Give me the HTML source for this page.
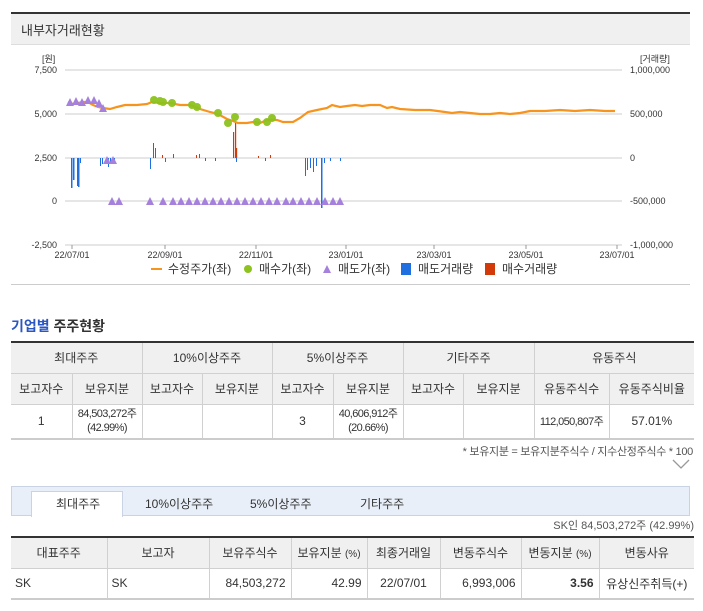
<!DOCTYPE html>
<html><head><meta charset="utf-8"><style>
*{margin:0;padding:0;box-sizing:border-box}
body{width:703px;height:611px;background:#fff;font-family:"Liberation Sans","Noto Sans CJK KR",sans-serif;color:#333;position:relative;overflow:hidden}
.abs{position:absolute}
table{border-collapse:collapse;position:absolute;font-size:12px;table-layout:fixed}
td{border:1px solid #d0d0d0;text-align:center;color:#333;white-space:nowrap;overflow:hidden}
.n{font-size:11px;letter-spacing:-0.6px}
</style></head><body>
<div class="abs" style="left:11px;top:12px;width:679px;height:33px;background:#f0f0f0;border-top:2px solid #333;border-bottom:1px solid #ddd"></div>
<div class="abs" style="left:21px;top:20px;font-size:13px;color:#333">내부자거래현황</div>
<div class="abs" style="left:11px;top:284px;width:679px;height:1px;background:#ccc"></div>
<svg class="abs" style="left:0;top:45px" width="703" height="240" viewBox="0 45 703 240">
<g stroke="#ddd" stroke-width="1.5">
<line x1="65" y1="70" x2="622" y2="70"/><line x1="65" y1="114" x2="622" y2="114"/><line x1="65" y1="158" x2="622" y2="158"/><line x1="65" y1="201" x2="622" y2="201"/><line x1="65" y1="245" x2="622" y2="245"/>
</g>
<g font-size="9" fill="#333" font-family="Liberation Sans,Noto Sans CJK KR,sans-serif">
<text x="42" y="62">[원]</text>
<text x="57" y="73" text-anchor="end">7,500</text><text x="57" y="117" text-anchor="end">5,000</text><text x="57" y="161" text-anchor="end">2,500</text><text x="57" y="204" text-anchor="end">0</text><text x="57" y="248" text-anchor="end">-2,500</text>
<text x="640" y="62">[거래량]</text>
<text x="630" y="73">1,000,000</text><text x="630" y="117">500,000</text><text x="630" y="161">0</text><text x="630" y="204">-500,000</text><text x="630" y="248">-1,000,000</text>
<text x="72" y="258" text-anchor="middle">22/07/01</text><text x="165" y="258" text-anchor="middle">22/09/01</text><text x="256" y="258" text-anchor="middle">22/11/01</text><text x="346" y="258" text-anchor="middle">23/01/01</text><text x="434" y="258" text-anchor="middle">23/03/01</text><text x="526" y="258" text-anchor="middle">23/05/01</text><text x="617" y="258" text-anchor="middle">23/07/01</text>
</g>
<g stroke="#999"><line x1="72" y1="245" x2="72" y2="249"/><line x1="165" y1="245" x2="165" y2="249"/><line x1="256" y1="245" x2="256" y2="249"/><line x1="346" y1="245" x2="346" y2="249"/><line x1="434" y1="245" x2="434" y2="249"/><line x1="526" y1="245" x2="526" y2="249"/><line x1="617" y1="245" x2="617" y2="249"/></g>
<g fill="#1f6fe0">
<rect x="71" y="158" width="1.5" height="30"/><rect x="73" y="158" width="1.5" height="22"/><rect x="77" y="158" width="1.5" height="28"/><rect x="78" y="158" width="1.5" height="29"/><rect x="80" y="158" width="1" height="5"/>
<rect x="100" y="158" width="1" height="8"/><rect x="102" y="158" width="1" height="6"/><rect x="108" y="158" width="1" height="9"/><rect x="110" y="158" width="1" height="5"/><rect x="114" y="158" width="1" height="5"/>
<rect x="150" y="158" width="1" height="11"/><rect x="165" y="158" width="1" height="4"/>
<rect x="305" y="158" width="1" height="18"/><rect x="307" y="158" width="1" height="12"/><rect x="310" y="158" width="1" height="10"/><rect x="313" y="158" width="1" height="14"/><rect x="316" y="158" width="1" height="8"/>
<rect x="321" y="158" width="1.5" height="50"/><rect x="324" y="158" width="1" height="5"/><rect x="330" y="158" width="1" height="3"/><rect x="340" y="158" width="1" height="3"/>
<rect x="205" y="158" width="1" height="3"/><rect x="215" y="158" width="1" height="3"/><rect x="236" y="158" width="1" height="4"/><rect x="265" y="158" width="1" height="3"/>
</g>
<g fill="#d23a0a">
<rect x="153" y="143" width="1" height="15"/><rect x="155" y="148" width="1" height="10"/><rect x="162" y="155" width="1" height="3"/><rect x="173" y="154" width="1" height="4"/><rect x="196" y="155" width="1" height="3"/><rect x="199" y="154" width="1" height="4"/>
<rect x="233" y="132" width="1.2" height="26"/><rect x="235" y="123" width="1.2" height="35"/><rect x="236" y="148" width="1.2" height="10"/><rect x="258" y="156" width="1" height="2"/><rect x="270" y="155" width="1" height="3"/>
</g>
<polyline fill="none" stroke="#f7941d" stroke-width="2.2" points="68,102 73,104 78,103 83,102 88,102 93,105 98,107 103,108 110,109 117,107 125,105 137,105 147,104 152,102 160,103 170,103 180,105 190,105 200,109 210,112 218,114 227,119 233,121 238,123 247,123 253,122 260,123 267,120 277,120 283,122 293,122 300,118 308,112 317,110 327,108 332,105 340,107 347,106 355,105 362,106 370,105 380,105 387,108 392,107 400,109 415,110 430,110 445,112 452,113 460,112 470,113 480,114 490,114 500,113 510,114 520,113 530,111 545,111 560,110 575,111 590,110 605,111 615,111"/>
<g fill="#8dc21f" opacity=".95">
<circle cx="154" cy="100" r="4"/><circle cx="163" cy="102" r="4"/><circle cx="160" cy="101" r="4"/><circle cx="172" cy="103" r="4"/><circle cx="192" cy="105" r="4"/><circle cx="197" cy="107" r="4"/><circle cx="218" cy="113" r="4"/><circle cx="228" cy="123" r="4"/><circle cx="235" cy="117" r="4"/><circle cx="257" cy="122" r="4"/><circle cx="267" cy="122" r="4"/><circle cx="272" cy="118" r="4"/>
</g>
<g fill="#a680dd">
<path d="M66,106 l4,-8 4,8z M72,105 l4,-8 4,8z M78,106 l4,-8 4,8z M84,104 l4,-8 4,8z M90,104 l4,-8 4,8z M95,107 l4,-8 4,8z M99,112 l4,-8 4,8z"/>
<path d="M103,164 l4,-8 4,8z M109,164 l4,-8 4,8z"/>
<path d="M108,205 l4,-8 4,8z M115,205 l4,-8 4,8z M146,205 l4,-8 4,8z M159,205 l4,-8 4,8z M169,205 l4,-8 4,8z M177,205 l4,-8 4,8z M185,205 l4,-8 4,8z M193,205 l4,-8 4,8z M201,205 l4,-8 4,8z M209,205 l4,-8 4,8z M217,205 l4,-8 4,8z M225,205 l4,-8 4,8z M233,205 l4,-8 4,8z M241,205 l4,-8 4,8z M249,205 l4,-8 4,8z M257,205 l4,-8 4,8z M265,205 l4,-8 4,8z M273,205 l4,-8 4,8z M282,205 l4,-8 4,8z M289,205 l4,-8 4,8z M297,205 l4,-8 4,8z M305,205 l4,-8 4,8z M313,205 l4,-8 4,8z M321,205 l4,-8 4,8z M329,205 l4,-8 4,8z M336,205 l4,-8 4,8z"/>
</g>
<g font-size="12" fill="#333" font-family="Liberation Sans,Noto Sans CJK KR,sans-serif">
<rect x="151" y="268" width="11" height="2" fill="#f7941d"/><text x="168" y="273">수정주가(좌)</text>
<circle cx="248" cy="269" r="4" fill="#8dc21f"/><text x="259" y="273">매수가(좌)</text>
<path d="M323,273 l4,-8 4,8z" fill="#a680dd"/><text x="338" y="273">매도가(좌)</text>
<rect x="401" y="263" width="10" height="12" fill="#1f6fe0"/><text x="418" y="273">매도거래량</text>
<rect x="485" y="263" width="10" height="12" fill="#d23a0a"/><text x="502" y="273">매수거래량</text>
</g>
</svg>

<div class="abs" style="left:11px;top:316px;font-size:14px;font-weight:bold;color:#333"><span style="color:#2a57c4">기업별</span> 주주현황</div>
<table style="left:11px;top:341px;width:683px;border-top:2px solid #333">
<colgroup><col style="width:61px"><col style="width:70px"><col style="width:60px"><col style="width:70px"><col style="width:61px"><col style="width:70px"><col style="width:60px"><col style="width:71px"><col style="width:75px"><col style="width:85px"></colgroup>
<tr style="height:31px;background:#f0f0f0"><td colspan="2" style="border-left:none">최대주주</td><td colspan="2">10%이상주주</td><td colspan="2">5%이상주주</td><td colspan="2">기타주주</td><td colspan="2" style="border-right:none">유동주식</td></tr>
<tr style="height:31px;background:#f0f0f0"><td style="border-left:none">보고자수</td><td>보유지분</td><td>보고자수</td><td>보유지분</td><td>보고자수</td><td>보유지분</td><td>보고자수</td><td>보유지분</td><td>유동주식수</td><td style="border-right:none">유동주식비율</td></tr>
<tr style="height:35px;border-bottom:2px solid #ccc"><td style="border-left:none">1</td><td class="n" style="line-height:14px">84,503,272주<br>(42.99%)</td><td></td><td></td><td>3</td><td class="n" style="line-height:14px">40,606,912주<br>(20.66%)</td><td></td><td></td><td class="n">112,050,807주</td><td style="border-right:none">57.01%</td></tr>
</table>
<div class="abs" style="right:10px;top:443px;font-size:11px;color:#555;letter-spacing:-0.3px">* 보유지분 = 보유지분주식수 / 지수산정주식수 * 100</div>
<svg class="abs" style="left:672px;top:459px" width="18" height="10"><path d="M1,1 L9,9 L17,1" fill="none" stroke="#999" stroke-width="1.3"/></svg>

<div class="abs" style="left:11px;top:486px;width:679px;height:30px;background:#e9eff8;border:1px solid #c9d3e3"></div>
<div class="abs" style="left:31px;top:491px;width:92px;height:26px;background:#fff;border:1px solid #c9d3e3;border-bottom:none"></div>
<div class="abs" style="left:56px;top:495px;font-size:12px">최대주주</div>
<div class="abs" style="left:145px;top:495px;font-size:12px">10%이상주주</div>
<div class="abs" style="left:250px;top:495px;font-size:12px">5%이상주주</div>
<div class="abs" style="left:360px;top:495px;font-size:12px">기타주주</div>
<div class="abs" style="right:9px;top:517px;font-size:11px;color:#555">SK인 84,503,272주 (42.99%)</div>

<table style="left:11px;top:536px;width:683px;border-top:2px solid #333">
<colgroup><col style="width:96px"><col style="width:102px"><col style="width:82px"><col style="width:76px"><col style="width:73px"><col style="width:81px"><col style="width:78px"><col style="width:95px"></colgroup>
<tr style="height:31px;background:#f0f0f0"><td style="border-left:none">대표주주</td><td>보고자</td><td>보유주식수</td><td>보유지분 <span style="font-size:10px">(%)</span></td><td>최종거래일</td><td>변동주식수</td><td>변동지분 <span style="font-size:10px">(%)</span></td><td style="border-right:none">변동사유</td></tr>
<tr style="height:31px;border-bottom:2px solid #ccc"><td style="border-left:none;text-align:left;padding-left:4px">SK</td><td style="text-align:left;padding-left:4px">SK</td><td style="text-align:right;padding-right:5px">84,503,272</td><td style="text-align:right;padding-right:5px">42.99</td><td>22/07/01</td><td style="text-align:right;padding-right:5px">6,993,006</td><td style="text-align:right;padding-right:5px;font-weight:bold">3.56</td><td style="border-right:none">유상신주취득(+)</td></tr>
</table>
</body></html>
